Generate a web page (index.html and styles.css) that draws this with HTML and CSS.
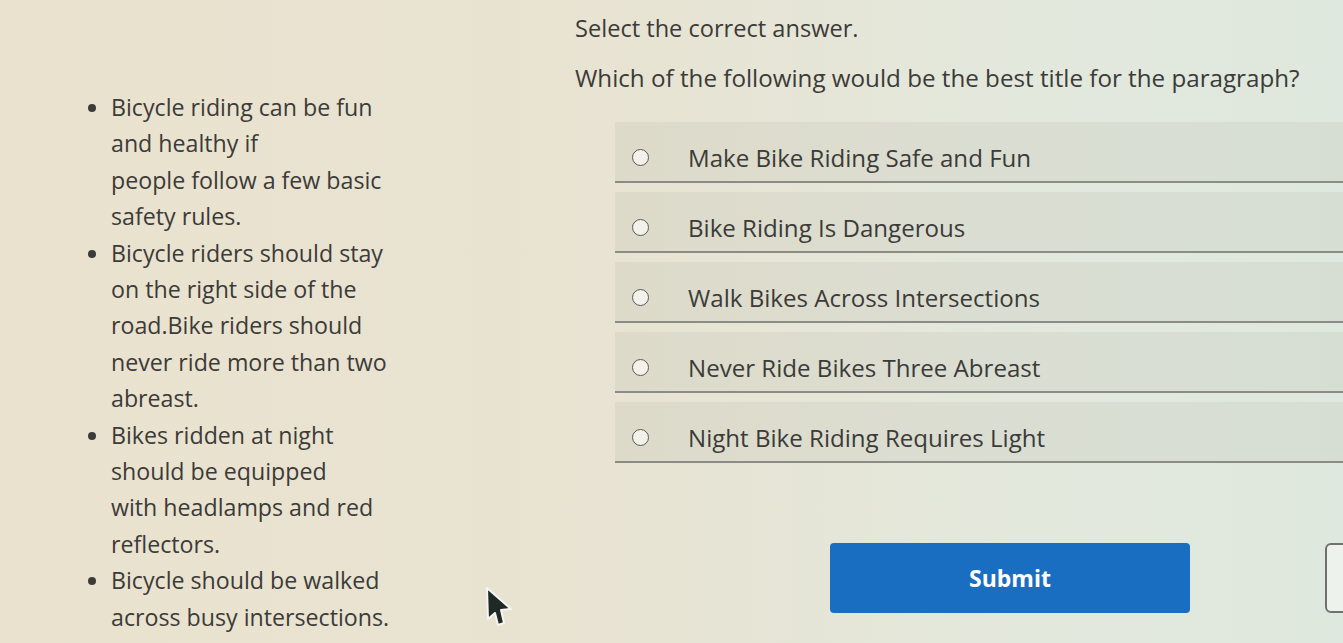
FILE: index.html
```html
<!DOCTYPE html>
<html lang="en">
<head>
  <meta charset="UTF-8" />
  <meta name="viewport" content="width=device-width, initial-scale=1" />
  <title>Select the correct answer</title>
  <link rel="stylesheet" href="styles.css">
</head>
<body>

  <div class="page">
    <h1 class="title">Select the correct answer.</h1>

    <div class="columns">
      <!-- Passage -->
      <ul class="passage">
        <li>Bicycle riding can be fun<br>and healthy if<br>people follow a few basic<br>safety rules.</li>
        <li>Bicycle riders should stay<br>on the right side of the<br>road.Bike riders should<br>never ride more than two<br>abreast.</li>
        <li>Bikes ridden at night<br>should be equipped<br>with headlamps and red<br>reflectors.</li>
        <li>Bicycle should be walked<br>across busy intersections.</li>
      </ul>

      <!-- Question -->
      <div class="question">
        <p class="prompt">Which of the following would be the best title for the paragraph?</p>

        <form class="options">
          <label class="option"><input type="radio" name="answer" /><span>Make Bike Riding Safe and Fun</span></label>
          <label class="option"><input type="radio" name="answer" /><span>Bike Riding Is Dangerous</span></label>
          <label class="option"><input type="radio" name="answer" /><span>Walk Bikes Across Intersections</span></label>
          <label class="option"><input type="radio" name="answer" /><span>Never Ride Bikes Three Abreast</span></label>
          <label class="option"><input type="radio" name="answer" /><span>Night Bike Riding Requires Light</span></label>
        </form>

        <div class="actions">
          <button type="button" class="submit">Submit</button>
          <button type="button" class="reset"></button>
        </div>
      </div>
    </div>
  </div>

  <!-- Mouse pointer -->
  <svg class="pointer" width="30" height="42" viewBox="0 0 30 42">
    <path d="M3 2 L27 23 L17 24 L20 37 L14 39 L11 27 L4 33 Z" fill="#1f2a26" stroke="#f4f6f2" stroke-width="2" stroke-linejoin="round" />
  </svg>

</body>
</html>
```

FILE: styles.css
```css
html, body {
  margin: 0;
  height: 100%;
  overflow: hidden;
}

body {
  font-family: "Open Sans", "DejaVu Sans", sans-serif;
  color: #3b3b39;
  background: linear-gradient(90deg, #eae2ce 0%, #e8e3d2 45%, #e3e8dc 75%, #dfe8de 100%);
}

.page {
  position: relative;
}

.title {
  margin: 10px 0 0 575px;
  font-size: 23.6px;
  font-weight: normal;
  line-height: 36px;
}

.columns {
  display: flex;
}

.passage {
  width: 575px;
  flex-shrink: 0;
  box-sizing: border-box;
  margin: 0;
  padding: 43px 0 0 111px;
  font-size: 23.2px;
  line-height: 36.4px;
  list-style: disc;
}

.question {
  flex: 1;
  min-width: 0;
}

.prompt {
  margin: 14px 0 0;
  font-size: 24.2px;
  line-height: 36px;
  white-space: nowrap;
}

.options {
  display: flex;
  flex-direction: column;
  gap: 9px;
  margin: 26px 0 0 40px;
}

.option {
  display: flex;
  align-items: center;
  height: 61px;
  box-sizing: border-box;
  padding: 11px 0 0 17px;
  background: rgba(120, 115, 100, 0.08);
  border-bottom: 2px solid #8b8c86;
  font-size: 24.1px;
}

.option input {
  appearance: none;
  box-sizing: border-box;
  width: 17px;
  height: 17px;
  margin: 0 39px 0 0;
  border: 1.5px solid #5a5a58;
  border-radius: 50%;
  background: #f2f1ea;
}

.actions {
  display: flex;
  gap: 135px;
  margin: 80px 0 0 255px;
}

.submit {
  width: 360px;
  height: 70px;
  flex-shrink: 0;
  border: none;
  border-radius: 4px;
  background: #1a6ec1;
  color: #fff;
  font-family: "Open Sans", sans-serif;
  font-size: 23px;
  font-weight: bold;
}

.reset {
  width: 100px;
  height: 70px;
  flex-shrink: 0;
  border: 2px solid #6f716c;
  border-radius: 6px;
  background: #eef2ec;
}

.pointer {
  position: absolute;
  left: 484px;
  top: 586px;
}
```
